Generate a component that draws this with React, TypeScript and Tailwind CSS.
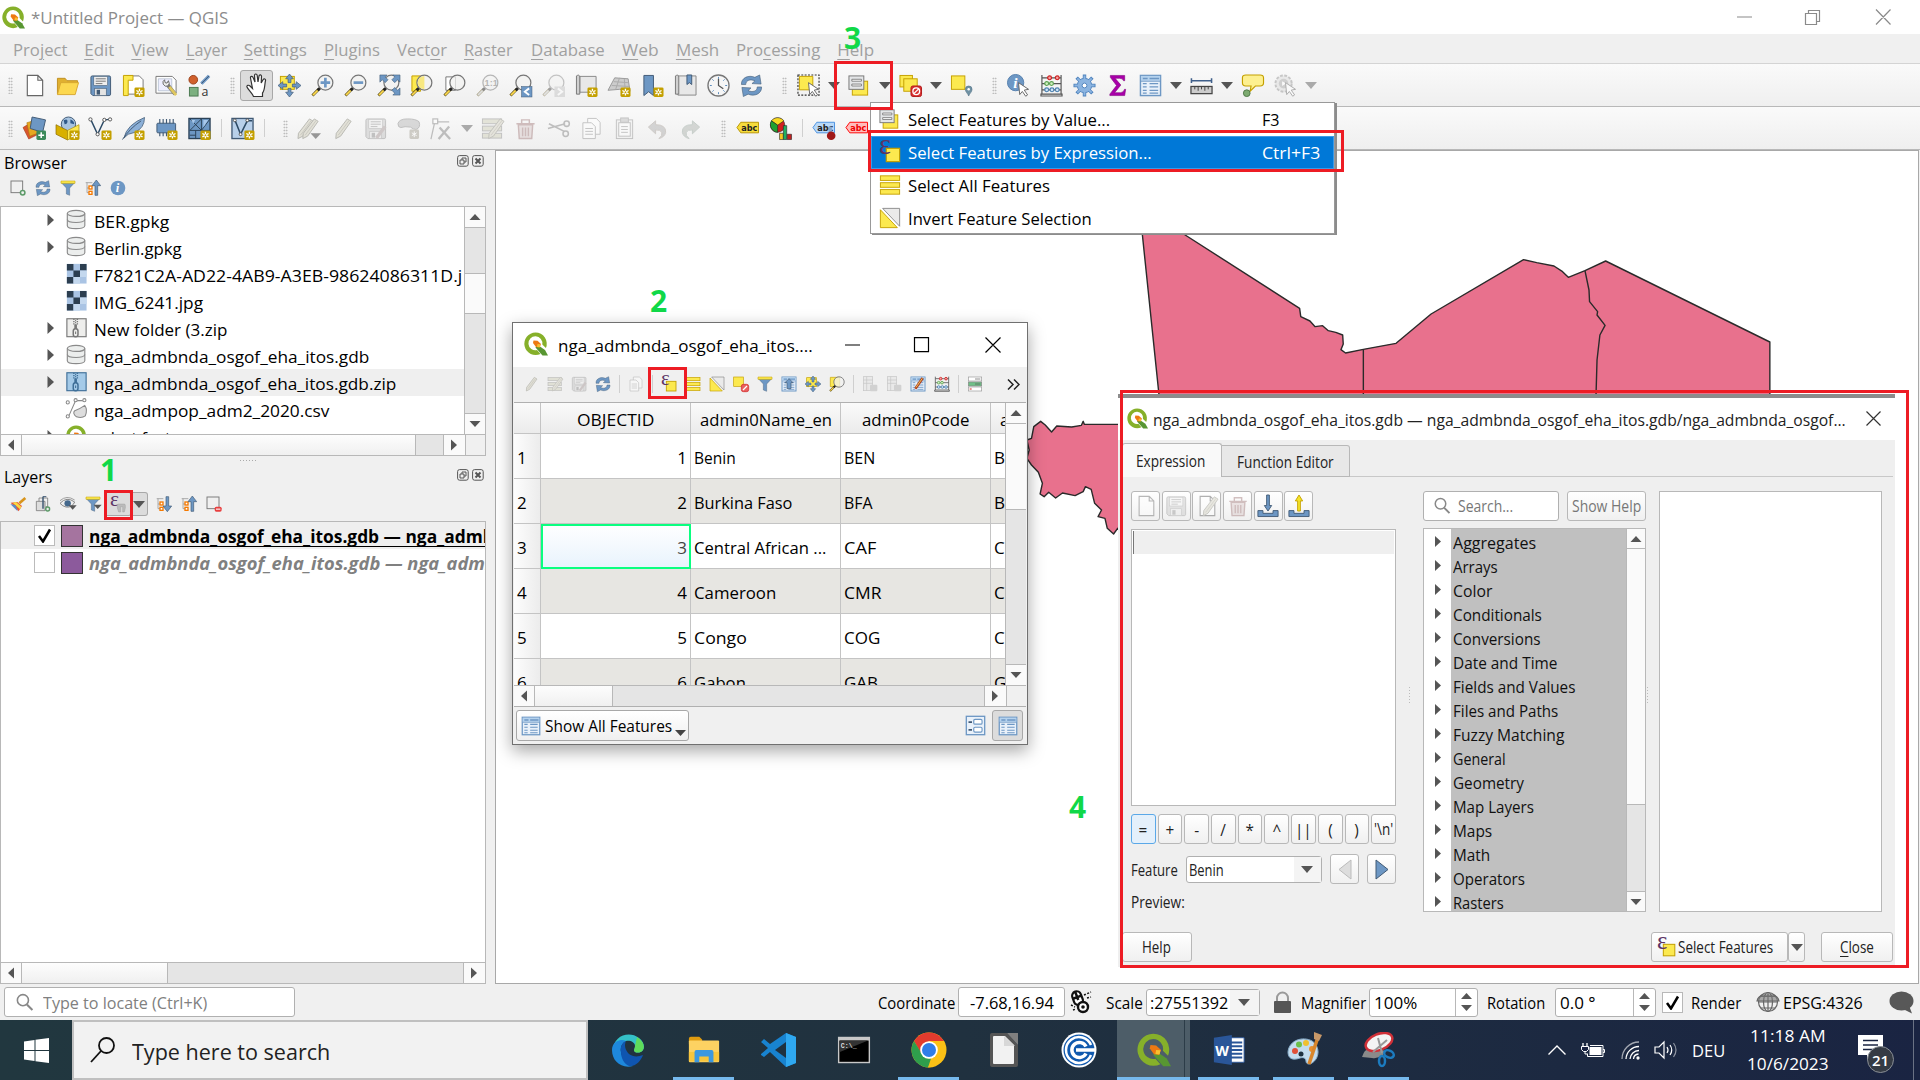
import React, { useLayoutEffect, useRef, useState } from "react";

type Kids = { children?: React.ReactNode };

/* Text squeezed or stretched horizontally to an exact width. "&" marks a mnemonic letter. */
function Fit({ w, t, className = "", inner = "" }: { w: number; t: string; className?: string; inner?: string }) {
  const ref = useRef<HTMLSpanElement>(null);
  const [s, setS] = useState(1);
  useLayoutEffect(() => {
    if (ref.current) setS(w / ref.current.offsetWidth);
  }, [w, t]);
  const i = t.indexOf("&");
  return (
    <span className={"inline-block shrink-0 whitespace-nowrap " + className} style={{ width: w }}>
      <span ref={ref} className={"inline-block origin-left whitespace-pre " + inner} style={{ transform: `scaleX(${s})` }}>
        {i < 0 ? (
          t
        ) : (
          <>
            {t.slice(0, i)}
            <span className="underline decoration-1 underline-offset-[3px]">{t[i + 1]}</span>
            {t.slice(i + 2)}
          </>
        )}
      </span>
    </span>
  );
}

const Y = "#fce94f";
const YS = "#c4a000";
const B = "#6d97c4";
const BS = "#415a75";

const Badge = ({ x = 13, y = 14 }: { x?: number; y?: number }) => (
  <g transform={`translate(${x} ${y})`}>
    <rect width="10.5" height="10" rx="1.5" fill="#c4a000" />
    <path d="M5.2 1.5v7M2 3.2l6.4 3.6M8.400 3.200l-6.400 3.600" stroke="#fff" strokeWidth="1.4" />
    <circle cx="5.200" cy="5" r="1" fill="#c4a000" />
  </g>
);
const Lens = ({ handle = "#fcd94f" }: { handle?: string }) => (
  <g>
    <path d="M1.500 22.500L8 16" stroke="#5a4a10" strokeWidth="3" />
    <path d="M2 22L7 17" stroke={handle} strokeWidth="1.800" />
    <path d="M7 17l3-3" stroke="#222" strokeWidth="3" />
    <circle cx="15" cy="9" r="7.800" fill="#f2f2f0" fillOpacity=".75" stroke="#777" strokeWidth="1.300" />
  </g>
);
const Pencil = () => (
  <g>
    <path d="M17 2l4 2.500L10 20l-5 2.500L5.500 17z" fill="#d8d6c8" stroke="#9a9a90" />
    <path d="M19 3.500L7.500 19" stroke="#b5b3a5" />
  </g>
);
const Disk = ({ c = B, s = BS }: { c?: string; s?: string }) => (
  <g>
    <path d="M2 3.500Q2 2 3.500 2H21q1.500 0 1.500 1.500V21q0 1.500-1.500 1.500H4L2 20.500z" fill={c} stroke={s} />
    <rect x="5" y="2.500" width="14.500" height="9.500" fill="#eee" stroke={s} strokeWidth=".6" />
    <path d="M7 5h10.500M7 7.500h10.500M7 10h7" stroke="#777" />
    <rect x="6" y="15" width="12" height="7.500" fill="#e4e4e4" stroke={s} strokeWidth=".6" />
    <rect x="8" y="16.500" width="3.500" height="5" fill={s} />
  </g>
);
const Page = () => <path d="M4.500 1.500h11l5 5v16h-16zM15.500 1.500v5h5" fill="#fff" stroke="#666" strokeWidth="1.200" />;
const Eps = ({ c = "#5c3566" }: { c?: string }) => (
  <text x="0" y="14" fontSize="31" fontFamily="Liberation Serif, serif" fill={c}>ε</text>
);
const Cursor = () => <path d="M12 9l10.500 7-4.500.8 3.500 5-2 1.400-3.500-5-2.700 3.300z" fill="#fff" stroke="#666" strokeWidth="1" />;
const Tree = () => (
  <g>
    <path d="M3 4v15M3 12h3M3 19h3M1 4h10" stroke="#888" fill="none" />
    <rect x="6" y="9" width="4.500" height="4.500" fill="#fff" stroke="#f57900" strokeWidth="2" />
    <rect x="6" y="17" width="4.500" height="4.500" fill="#fff" stroke="#f57900" strokeWidth="2" />
  </g>
);
const Grid = () => (
  <g>
    <rect x="1.500" y="1.500" width="21" height="21" fill="#e9f1fa" stroke={B} strokeWidth="1.500" />
    <path d="M2 4.500h20" stroke="#b4d2ee" strokeWidth="5" />
    <path d="M4 4.700h5M11 4.700h10" stroke={B} strokeWidth="1.800" />
    <path d="M4 10h4M4 13.500h4M4 17h4M4 20h4M11 10h9M11 13.500h9M11 17h9M11 20h9" stroke={B} strokeWidth="1.300" />
    <path d="M2 7.500h20" stroke={B} />
  </g>
);
const Abacus = () => (
  <g fill="none" strokeWidth="1.200">
    <path d="M2 1v20M22 1v20M1 21h22v2H1zM2 4h20M2 10h20M2 16.500h20" stroke="#555" />
    <g fill="#f8a0a0" stroke="#cc2020"><circle cx="10" cy="4" r="2" /><circle cx="18" cy="4" r="2" /></g>
    <g fill="#d0f0c0" stroke="#5aa050"><circle cx="7" cy="10" r="2" /><circle cx="12" cy="10" r="2" /></g>
    <g fill="#d0e4f8" stroke="#4a80b0"><circle cx="7" cy="16.500" r="2" /><circle cx="12.500" cy="16.500" r="2" /><circle cx="18" cy="16.500" r="2" /></g>
  </g>
);
const Bars = () => (
  <g fill={Y} stroke={YS}><rect x="1.500" y="2" width="21" height="5" /><rect x="1.500" y="9.500" width="21" height="5" /><rect x="1.500" y="17" width="21" height="5" /></g>
);
const Funnel = ({ c = B }: { c?: string }) => (
  <g>
    <path d="M2 4h20l-7.500 8v11l-5-2v-9z" fill={c} stroke={BS} strokeWidth=".6" />
    <path d="M1.500 1.500h21v3.500h-21z" fill={Y} stroke={YS} strokeWidth=".8" />
  </g>
);
const Tri = ({ d, x = 0, y = 0 }: { d: string; x?: number; y?: number }) => <path transform={`translate(${x} ${y})`} d={d} fill="#555" />;
const Refresh = () => (
  <g fill={B} stroke={BS} strokeWidth=".6">
    <path d="M1.500 11C1 4 9 .5 15.500 3.500L20.500 1l1.500 9.500-9.500-.5 3-2.800C11 5 6 6.500 6 11z" />
    <path d="M22.500 13.500C23 20.500 15 24 8.500 21l-5 2.500L2 14l9.500.5-3 2.800C13 19.500 18 18 18 13.500z" />
  </g>
);
const Move = ({ y = true }: { y?: boolean }) => (
  <g>
    {y && <rect x="2.500" y="2.500" width="14.500" height="13.500" fill={Y} stroke={YS} />}
    <path d="M12 0l4 5h-2.500v4h-3V5H8zM12 24l4-5h-2.500v-4h-3v4H8zM0 12l5-4v2.500h4v3H5V16zM24 12l-5-4v2.500h-4v3h4V16z" fill={B} stroke={BS} strokeWidth=".7" />
  </g>
);
const Q = () => (
  <g>
    <path fillRule="evenodd" d="M11.500.5a11.300 11.300 0 1 0 5 21.500l-3.500-3.900a7 7 0 1 1 5.300-5.600l3.600 3.600A11.300 11.300 0 0 0 11.500.5z" fill="#86b02a" />
    <path d="M13 12.500l8 5.500 3 5.500h-5.500l-7-8z" fill="#589632" />
    <path d="M9.500 8.500l4 .3L17 12l-1.500 3.500-3.500-.5-3-4z" fill="#ee7913" />
    <path d="M13.500 12l3 .2-.5 3-3-.3z" fill="#f8c030" />
  </g>
);
const RulerPage = () => (
  <g><path d="M5 2h13l4 4v15H5z" fill="#fff" stroke="#777" /><path d="M1.500 1.500h10v5h-5v16h-5z" fill={Y} stroke={YS} /></g>
);
const Lbl = ({ bg, bd, fg = "#222" }: { bg: string; bd: string; fg?: string }) => (
  <g>
    <path d="M1 11L5 5.500H23.500v11H5z" fill={bg} stroke={bd} />
    <text x="5.500" y="14.200" fontSize="8.500" fontWeight="bold" fontFamily="DejaVu Sans, sans-serif" fill={fg}>abc</text>
  </g>
);
const Zip = ({ c, s }: { c: string; s: string }) => (
  <g>
    <rect x="1" y="2" width="22" height="20.500" fill={c} stroke={s} strokeWidth="1.300" />
    <path d="M9 2v7M13 2v7" stroke={s} strokeWidth="1.600" strokeDasharray="1.500 1" />
    <path d="M11 2v7" stroke={s} strokeWidth="1.200" strokeDasharray="1.500 1" strokeDashoffset="1.250" />
    <path d="M11 8.500v6" stroke={s} strokeWidth="3" />
    <rect x="8.300" y="13.500" width="5.400" height="9" rx="2.600" fill={c} stroke={s} strokeWidth="1.700" />
    <path d="M11 16.500v3" stroke={s} strokeWidth="1.200" />
  </g>
);

const icons: Record<string, React.ReactNode> = {
  q: <Q />,
  page: <Page />,
  open: <g><path d="M1.500 21V4.500h8l2 2.500h11v3" fill="#e0b030" stroke="#c09020" /><path d="M1.500 21.500L5 9h18.500L20 21.500z" fill="#fcd850" stroke="#d8a830" /></g>,
  save: <Disk />,
  layout: <g><RulerPage /><Badge /></g>,
  manager: <g><path d="M1 2.500h17l4 4V20H1z" fill="#fff" stroke="#777" /><path d="M3.500 5h14v12.500h-14z" fill="#eef" stroke="#9ab" strokeWidth=".6" /><path d="M12 10l9 11" stroke="#777" strokeWidth="4" /><path d="M15 13.500l7 8.500" stroke="#e0c860" strokeWidth="3" /><path d="M8.500 10.500q-1-3 1.500-4.500l.5 3 2 .5 1.500-2.500q2 3-.5 5.500-3 1.500-5-2z" fill="#eee" stroke="#666" /></g>,
  style: <g><circle cx="5.500" cy="6" r="4.500" fill="#d0602c" stroke="#9a4018" /><path d="M14 10L22 2" stroke={B} strokeWidth="3.500" /><path d="M14 10L22 2" stroke={BS} strokeWidth="1" /><rect x="1.500" y="14" width="9" height="9" fill="#7cb080" stroke="#4a7850" /><text x="14" y="23" fontSize="13" fontFamily="Open Sans, sans-serif" fill="#333">a</text></g>,
  hand: <path d="M8.500 23.500c-1-3-5.500-7-6.500-9.500-.5-1.500 1.500-2.500 3-1l2.500 2.500L5.500 5c-.3-2 2-2.300 2.600-.5L10 9 9.500 2.500c0-2 2.500-2 2.700 0L13 9l1-6c.4-1.700 2.600-1.300 2.500.5L16.200 10l2-3.500c.9-1.300 2.700-.5 2.300 1C19.500 12 20 17 17.500 20v3.500z" fill="#fff" stroke="#333" strokeWidth="1.200" />,
  pan: <Move />,
  zin: <g><Lens /><path d="M15 4v10M10 9h10" stroke={B} strokeWidth="2.800" /></g>,
  zout: <g><Lens /><path d="M10 9h10" stroke={B} strokeWidth="2.800" /></g>,
  zfull: <g><Lens /><g fill={B} stroke={BS} strokeWidth=".6"><path d="M3 1h7.500l-2 2 3 3-3 3-3-3-2.500 2.500zM24 1h-7.500l2 2-3 3 3 3 3-3 2.500 2.500zM24 22h-7.500l2-2-3-3 3-3 3 3 2.500-2.500z" /></g></g>,
  zsel: <g><path d="M2 2h9v16H2z" fill={Y} stroke={YS} /><Lens /><path d="M15 2a7 7 0 0 0 0 14z" fill="#f8e880" /></g>,
  zlay: <g><path d="M3 3h10v14H3z" fill="#fff" stroke="#777" /><Lens /></g>,
  zone: <g opacity=".5"><Lens handle="#ccc" /><text x="9" y="12.500" fontSize="9.500" fontWeight="bold" fontFamily="Liberation Sans, sans-serif" fill="#777">1:1</text></g>,
  zlast: <g><Lens /><rect x="13" y="13" width="11" height="11" fill={B} stroke={BS} strokeWidth=".5" /><path d="M21 15l-4.500 3.500L21 22" fill="none" stroke="#fff" strokeWidth="2" /></g>,
  znext: <g opacity=".4"><Lens handle="#ccc" /><rect x="13" y="13" width="11" height="11" fill="#bbb" /><path d="M16.500 15l4.500 3.500-4.500 3.500" fill="none" stroke="#fff" strokeWidth="2" /></g>,
  newmap: <g><path d="M5 2.500h17V19H5z" fill="#e8e8e8" stroke="#888" /><path d="M1.500 2q3-2 3.500 1v18h-3.500z" fill="#d0d0d0" stroke="#777" /><Badge /></g>,
  map3d: <g><path d="M7 4l14 1 2 13-11-2-12 1z" fill="#ccc" stroke="#999" /><path d="M6 8l15 1M4 12l18 1M12 4l-4 12M17 5l1 12" stroke="#aaa" fill="none" /><Badge /></g>,
  bookm: <g><path d="M3 1.500h10v21l-5-4-5 4z" fill={B} stroke={BS} /><Badge /></g>,
  book: <g><path d="M4 2h19v20H4z" fill="#e8e8e8" stroke="#888" /><path d="M1.500 2q3-2 3.500 1v18h-3.500z" fill="#d0d0d0" stroke="#777" /><path d="M13.500 1h5v10l-2.500-2-2.500 2z" fill={B} stroke={BS} /></g>,
  clock: <g><circle cx="12" cy="12" r="11" fill="#f6f6f6" stroke="#777" strokeWidth="1.400" /><path d="M12 3v2M12 19v2M3 12h2M19 12h2M5.600 5.600l1.400 1.400M18.400 5.600L17 7M5.600 18.400L7 17M18.400 18.400L17 17" stroke="#5588bb" /><path d="M12 5v7l5 3.500" fill="none" stroke="#555" strokeWidth="1.300" /></g>,
  refresh: <Refresh />,
  select: <g><rect x="1" y="1" width="22" height="21" fill="none" stroke="#333" strokeWidth="1.200" strokeDasharray="2 1.500" /><path d="M2.500 2.500h14v14h-14z" fill={Y} stroke={YS} /><Cursor /></g>,
  selval: <g><rect x="4.500" y="7.500" width="16" height="14.500" fill={Y} stroke={YS} /><rect x="1" y="2" width="15.500" height="14" fill="#e4e6e8" stroke="#777" /><path d="M4 5.500h10v2H4zM4 10.500h10v2H4z" fill="#fff" stroke="#666" strokeWidth=".8" /></g>,
  desel: <g fill={Y} stroke={YS}><rect x="1" y="1.500" width="13" height="12" /><rect x="5" y="5" width="14" height="13" /><rect x="12.500" y="12.500" width="11" height="11" rx="2" fill="#d83030" stroke="#b01818" /><circle cx="18" cy="18" r="3.500" fill="none" stroke="#fff" strokeWidth="1.400" /><path d="M20.500 15.500l-5 5" stroke="#fff" strokeWidth="1.400" /></g>,
  selloc: <g><rect x="1.500" y="2" width="14" height="14" fill={Y} stroke={YS} /><path d="M19.500 23c-1-3-3.500-4-3.500-7a3.500 3.500 0 0 1 7 0c0 3-2.500 4-3.500 7z" fill="#6f91a3" stroke="#4a6a80" strokeWidth=".6" /><circle cx="19.500" cy="16" r="1.300" fill="#fff" /></g>,
  ident: <g><circle cx="9" cy="9" r="8.500" fill={B} stroke="#5580ad" /><text x="6.500" y="14.500" fontSize="16" fontWeight="bold" fontStyle="italic" fontFamily="Liberation Serif, serif" fill="#fff">i</text><Cursor /></g>,
  abacus: <Abacus />,
  gear: <g><path d="M12 .5v23M.5 12h23M3.800 3.800l16.400 16.400M20.200 3.800L3.800 20.200" stroke="#4f83bd" strokeWidth="3.600" /><circle cx="12" cy="12" r="7.500" fill="#8bb4e0" stroke="#4f83bd" /><path d="M12 1.500v21M1.500 12h21M4.500 4.500l15 15M19.500 4.500l-15 15" stroke="#8bb4e0" strokeWidth="2" /><circle cx="12" cy="12" r="2.500" fill="#fff" stroke="#4f83bd" /></g>,
  sigma: <path d="M4.500 1.500h15V7h-1.200Q17.500 4.500 14 4.500H9.500l6 7-6.500 8h6q3.500 0 4.300-3.500h1.200L19.500 22.500H4V21l7-9-6.500-8.500z" fill="#a800a8" stroke="#800080" strokeWidth=".6" />,
  table: <Grid />,
  ruler: <g><path d="M2 7h20M1.500 4.500v5M22.500 4.500v5" stroke="#3f5f8a" strokeWidth="1.600" /><rect x="1" y="13" width="22" height="7.500" fill="#ccc" stroke="#444" strokeWidth="1.300" /><path d="M5 13v3M8.500 13v4.500M12 13v3M15.500 13v4.500M19 13v3" stroke="#444" /></g>,
  tip: <g><path d="M5 1h15q3.500 0 3.500 3v5.500q0 3-3.500 3h-5l-5.500 5.500 1-5.500H5q-3.500 0-3.500-3V4Q1.500 1 5 1z" fill="#fdf090" stroke="#c4a000" strokeWidth="1.200" /><circle cx="6" cy="20" r="3.500" fill="#7caa70" stroke="#507848" /></g>,
  run: <g opacity=".5"><circle cx="10" cy="10" r="8.500" fill="#ddd" stroke="#999" strokeDasharray="3 1.500" strokeWidth="2" /><circle cx="10" cy="10" r="5" fill="#aaa" /><path d="M8.500 7.500l4 2.500-4 2.500z" fill="#fff" /><Cursor /></g>,
  dsrc: <g><path d="M0 11l8-5 8 12-10 5z" fill="#d8562c" stroke="#a03818" strokeWidth=".6" /><path d="M4 6l10-3 4 13-11 4z" fill="#e8a820" stroke="#a87810" strokeWidth=".6" /><path d="M9.500 0l14 3-3 13-13-4z" fill={B} stroke={BS} /><rect x="14" y="14" width="10" height="10" rx="1.500" fill="#3c8a5a" /><path d="M19 16v6M16 19h6" stroke="#fff" strokeWidth="1.600" /></g>,
  gpkg: <g><circle cx="13" cy="7.500" r="7.500" fill="#a8c4e0" stroke={BS} /><path d="M8 3.500q4-2 4 1t-3 3zM15 2.500q4 1 4 5l-4-1z" fill="#2f5a8a" /><path d="M0 8l12 6v10L0 18z" fill="#d8b000" stroke="#8a6a00" strokeWidth=".7" /><path d="M24 8l-12 6v10l12-6z" fill="#fce850" stroke="#a88a00" strokeWidth=".7" /><Badge x={14} y={14} /></g>,
  vlay: <g><path d="M2 3l7 15 7-15 6-.5" fill="none" stroke="#2c4a66" strokeWidth="1.500" /><g fill="#fff" stroke="#555"><circle cx="1.500" cy="2.500" r="1.700" /><circle cx="9" cy="18" r="1.700" /><circle cx="16" cy="3" r="1.700" /><circle cx="22" cy="2.500" r="1.700" /></g><Badge /></g>,
  feather: <g><path d="M2 22Q5 8 23.500.5q0 11-10 15.500l-7 2z" fill="#8cb0d8" stroke={BS} strokeWidth=".8" /><path d="M.5 23.500Q8 12 20 4" stroke={BS} fill="none" /><Badge /></g>,
  chip: <g><path d="M5 2v18M8.500 2v18M12 2v18M15.500 2v18M19 2v18" stroke="#415a75" strokeWidth="1.200" /><rect x="2" y="6.500" width="19.500" height="10" rx="1" fill={B} stroke={BS} /><Badge /></g>,
  virt: <g><rect x="1" y="1.500" width="22" height="21" fill={B} stroke="#2c4258" strokeWidth="1.400" /><path d="M2 14h21M14 2v12M2 2l12 12M14 2L2 14M23 2l-9 12M8 14v9M14 14v9M2 19h6" stroke="#2c4258" /><path d="M3.500 3h4l-2 4zM16 3h5l-5 8z" fill="#a8c8ec" /><Badge /></g>,
  vtab: <g><rect x="1" y="1.500" width="22" height="21" fill="#b8d0ea" stroke={BS} strokeWidth="1.400" /><path d="M4 3l6 15 7-14h5" fill="none" stroke="#2c4a66" strokeWidth="1.600" /><g fill="#fff" stroke="#555"><circle cx="4" cy="3.500" r="1.500" /><circle cx="10" cy="18" r="1.500" /><circle cx="17" cy="3.500" r="1.500" /></g><Badge x={14} y={14} /></g>,
  pencils: <g opacity=".65"><g transform="translate(-5 0)"><Pencil /></g><g transform="translate(0 0)"><Pencil /></g><path d="M13 17h11l-5.500 6z" fill="#666" /></g>,
  pencil: <g opacity=".65"><Pencil /></g>,
  gsave: <g opacity=".4"><Disk c="#bbb" s="#777" /><path d="M13 22L22 10" stroke="#988" strokeWidth="3.500" /></g>,
  blob: <g opacity=".5"><path d="M1 7q1-5 10-5t12 3q2 6-3 8-3 0-6-2.500Q8 9.500 4 11 1 11 1 7z" fill="#bbb" stroke="#888" /><rect x="13" y="13" width="10" height="10" rx="1.500" fill="#a8a498" /><path d="M18 15v6M15.500 16.500l5 3M20.500 16.500l-5 3" stroke="#fff" /></g>,
  vtx: <g opacity=".5" fill="none" stroke="#888" strokeWidth="1.300"><path d="M1 23L5 5h15" /><rect x="3" y="2" width="5" height="5" fill="#fff" /><path d="M10 11l11 12M20 10L9 23" strokeWidth="2.400" /></g>,
  multi: <g opacity=".55"><g fill="#d4d4c0" stroke="#999"><rect x="1.500" y="2" width="20" height="5" /><rect x="1.500" y="9.500" width="20" height="5" /><rect x="1.500" y="17" width="20" height="5" /></g><g transform="translate(3 0)"><Pencil /></g></g>,
  trash: <g opacity=".45" fill="none" stroke="#a07878" strokeWidth="1.500"><path d="M2.500 7h19M8 6.500V3h8v3.500" /><path d="M4.500 8h15l-1 14.500h-13z" fill="#d8c8c8" /><path d="M9 11v9M12 11v9M15 11v9" /></g>,
  cut: <g opacity=".5" fill="none" stroke="#888" strokeWidth="1.600"><path d="M2 7l16 8M1 12l18-5" /><circle cx="19.500" cy="17.500" r="2.800" /><circle cx="20.500" cy="7" r="2.800" /></g>,
  copy: <g opacity=".45" stroke="#888" fill="#fff"><path d="M8 1.500h9l4 4V18H8z" /><path d="M3 6h9l4 4v12.500H3z" /><path d="M5.500 12h8M5.500 15h8M5.500 18h8" /></g>,
  paste: <g opacity=".45" stroke="#888" fill="#eee"><rect x="3.500" y="3" width="17" height="19.500" /><rect x="6" y="6" width="12" height="14" fill="#fff" /><rect x="8" y="1" width="8" height="4.500" fill="#bbb" /><path d="M8.500 10h7M8.500 13h7M8.500 16h7" /></g>,
  undo: <path opacity=".45" d="M2.500 10.500L10 4v4q11 0 10.500 8-1 5-7 6.500 4-3 3-6.500-1.500-3-6.500-2.500v4z" fill="#aaa" stroke="#a09890" />,
  redo: <path opacity=".45" d="M21.500 10.500L14 4v4Q3 8 3.500 16q1 5 7 6.500-4-3-3-6.500Q9 13 14 13.500v4z" fill="#aab0aa" stroke="#90a098" />,
  abcY: <Lbl bg="#f6dc3c" bd="#b89400" />,
  abcB: <g><Lbl bg="#b8d8f8" bd="#4a90e0" /><path d="M19 10v8" stroke="#88a8d0" strokeWidth="3.500" /><circle cx="20" cy="19.500" r="4.500" fill="#a01818" /></g>,
  abcR: <Lbl bg="#fbb" bd="#f00" fg="#e00" />,
  pie: <g stroke="#222" strokeWidth=".6"><circle cx="9" cy="8.500" r="7.500" fill="#d02020" /><path d="M9 8.500L2.500 4a8 8 0 0 1 13 0z" fill="#f8d820" /><path d="M9 8.500L2.500 4A8 8 0 0 0 9 16z" fill="#20a030" /><path d="M11 17h4v6.500h-4z" fill="#f8c820" /><path d="M15 9h3.500v14.500H15z" fill="#20b060" /><path d="M19 18h4.500v5.500H19z" fill="#c02020" /></g>,
  addb: <g><rect x="1.500" y="1.500" width="17.500" height="17.500" fill="none" stroke="#777" strokeWidth="1.400" /><circle cx="19" cy="19" r="4.500" fill="#5c9a68" /><circle cx="19" cy="19" r="2.200" fill="#eee" /></g>,
  funnel: <Funnel />,
  treeup: <g><Tree /><path d="M17 0l6.500 8.500H19V23h-4V8.500h-4.500z" fill={B} stroke={BS} /></g>,
  treedn: <g><Tree /><path d="M17 23.500l6.500-8.500H19V1h-4v14h-4.500z" fill={B} stroke={BS} /></g>,
  info: <g><circle cx="12" cy="12" r="11" fill={B} /><text x="8.500" y="18.500" fontSize="19" fontWeight="bold" fontStyle="italic" fontFamily="Liberation Serif, serif" fill="#fff">i</text></g>,
  brush: <g><path d="M14 11L23 3" stroke="#d8941c" strokeWidth="4" /><path d="M1 10l10-1 7 6-5 8z" fill="#e85838" /><path d="M4 10l5-1 8 7-2 4z" fill="#f8d840" /><path d="M.5 12l11 11-3-9z" fill="#5a8ac8" /></g>,
  addgrp: <g fill="none" stroke="#777" strokeWidth="1.200"><path d="M6 8V3h13v13h-3" /><path d="M2 8v14h13V8z" fill="#ddd" /><path d="M12 19V1l5 0M12 1v18" stroke={BS} strokeWidth="1.500" /><circle cx="19" cy="19.500" r="4" fill="#5c9a68" stroke="none" /><circle cx="19" cy="19.500" r="1.800" fill="#eee" stroke="none" /></g>,
  eye: <g><path d="M0 11Q10 0 22 9q-4 9-13 7.500-5-1-9-5.500z" fill="#eee" stroke="#888" strokeWidth="1.500" /><circle cx="11.500" cy="11" r="4.800" fill="#44688c" /><path d="M0 7Q10-2 22 6" fill="none" stroke="#999" strokeWidth="1.400" /><Tri d="M0 0h12L6 6.500z" x={13} y={14} /></g>,
  funneld: <g><Funnel /><Tri d="M0 0h12L6 6.500z" x={13} y={13} /></g>,
  epsf: <g><text x="0" y="14.500" fontSize="32" fontFamily="Liberation Serif, serif" fill="#5c3566">ε</text><path d="M11 14q0-2 2-2h8q2 0 2 2v4l-1.500 6h-2.500v-8h-3v8h-3l-2-6z" fill="#bbb" stroke="#999" strokeWidth=".6" /></g>,
  remb: <g><rect x="1.500" y="1.500" width="18" height="17.500" fill="none" stroke="#777" strokeWidth="1.400" /><rect x="13" y="16" width="10.500" height="7.500" rx="2.500" fill="#e84040" /><path d="M15 19.700h6.500" stroke="#fff" strokeWidth="1.600" /></g>,
  db: <g fill="#eceeed" stroke="#8a8a8a" strokeWidth="1.300"><path d="M1.500 5v14c0 4.500 20 4.500 20 0V5" /><ellipse cx="11.500" cy="5" rx="10" ry="3.500" /><path d="M1.500 12c0 4.500 20 4.500 20 0" fill="none" /></g>,
  raster: <g><rect x="1" y="1" width="22.500" height="22.500" fill="#aac4e4" /><path d="M1 1h7.500v7.500H1zM16 1h7.500v7.500H16zM8.500 8.500H16V16H8.500zM1 16h7.500v7.500H1z" fill="#2c3e50" /><path d="M8.500 16H16v7.500H8.500zM16 8.500h7.500V16H16z" fill="#c4d8ee" /></g>,
  zip: <Zip c="#eeeeec" s="#777" />,
  zipb: <Zip c="#a4cae8" s="#3f6f98" />,
  csv: <g fill="none" stroke="#888" strokeWidth="1.200"><path d="M3 21L11 3h9" /><g fill="#fff"><circle cx="2" cy="5" r="1.800" /><circle cx="2" cy="21" r="1.800" /><circle cx="11" cy="2.500" r="1.800" /><circle cx="21" cy="2.500" r="1.800" /></g><path d="M21.500 8.500q3.500 5 .5 12-4 3-10 1-5-4-2-7 6-2 11.500-6z" fill="#ddd" /></g>,
  selexp: <g><rect x="8" y="8" width="14.500" height="14.500" fill={Y} stroke={YS} strokeWidth="1.300" /><Eps /></g>,
  bars: <Bars />,
  invert: <g><path d="M1.500 3v19.500H20z" fill={Y} stroke={YS} /><path d="M4 1.500h18.500V21z" fill="#eaeaea" stroke="#888" /></g>,
  desel2: <g fill={Y} stroke={YS}><rect x="1" y="1.500" width="14.500" height="14" /><rect x="12.500" y="12.500" width="11" height="11" rx="3" fill="#e86060" stroke="#d02020" /><path d="M15 21l6-6" stroke="#fff" strokeWidth="1.800" /></g>,
  totop: <g><Grid /><path d="M12 4l6 6h-3v9H9v-9H6z" fill={B} stroke={BS} /></g>,
  zrow: <g><path d="M2 2h14v14H2z" fill={Y} stroke={YS} /><Lens /></g>,
  colg: <g opacity=".35"><rect x="2" y="1" width="14" height="21" fill="#ddd" stroke="#777" /><path d="M2 6h14M2 11h14M7 1v21" stroke="#777" /><rect x="12" y="13" width="11" height="10" rx="1.500" fill="#999" /></g>,
  edit: <g><Grid /><path d="M8 19L19 3" stroke="#b04020" strokeWidth="4" /><path d="M9 17L18.500 3.500" stroke="#f0d060" strokeWidth="1.400" /></g>,
  cond: <g><rect x="2" y="1.500" width="20" height="6" fill="#fff" stroke="#999" /><rect x="2" y="9" width="20" height="6" fill="#6fbf86" stroke="#888" /><rect x="2" y="16.500" width="20" height="6" fill="#fff" stroke="#999" /><path d="M12 4.500h8M12 12h8" stroke="#555" /><path d="M4 19.500h3" stroke="#e02020" strokeWidth="1.500" /></g>,
  form: <g><rect x="1.500" y="1.500" width="21" height="21" fill="#e9f1fa" stroke={B} strokeWidth="1.500" /><path d="M4 8h4M4 17h4" stroke={BS} strokeWidth="2" /><rect x="10" y="5" width="9.500" height="5.500" rx="1.500" fill="#fff" stroke={B} strokeWidth="1.300" /><rect x="10" y="14" width="9.500" height="5.500" rx="1.500" fill="#fff" stroke={B} strokeWidth="1.300" /></g>,
  import: <g><path d="M1 17h5.500v3h11v-3H23v6.500H1z" fill={B} stroke={BS} /><path d="M12 17.500l-4-6h2.500V0h3v11.500H16z" fill={B} stroke={BS} /></g>,
  export: <g><path d="M1 17h5.500v3h11v-3H23v6.500H1z" fill={B} stroke={BS} /><path d="M12 0L8 6.500h2.500v11h3v-11H16z" fill="#f4e428" stroke={YS} /></g>,
  pageP: <g opacity=".45"><Page /></g>,
  diskP: <g opacity=".35"><Disk c="#bbb" s="#777" /></g>,
  editP: <g opacity=".5"><Page /><g transform="translate(3 0)"><Pencil /></g></g>,
  lens: <g fill="none" stroke="#888" strokeWidth="2"><circle cx="10" cy="9" r="7" /><path d="M15 14.500l7 7" strokeWidth="2.600" /></g>,
};

function Ic({ n, s = 24 }: { n: string; s?: number }) {
  return (
    <svg viewBox="0 0 24 24" width={s} height={s} className="shrink-0 overflow-visible">
      {icons[n]}
    </svg>
  );
}

const Cell = ({ n }: { n: string }) => (
  <div className="flex w-[33px] shrink-0 justify-center">
    <Ic n={n} s={23} />
  </div>
);
const Grip = () => (
  <div className="flex w-[24px] shrink-0 justify-center pl-2">
    <div className="h-[17px] w-[5px] bg-[radial-gradient(#b0b0b0_0.7px,transparent_0.9px)] bg-[length:2.5px_3px]" />
  </div>
);
const Arr = ({ c = "#555" }: { c?: string }) => (
  <div className="flex w-[18px] shrink-0 justify-center">
    <svg width="12" height="7" viewBox="0 0 12 7"><path d="M0 0h12L6 7z" fill={c} /></svg>
  </div>
);
const Sep = ({ w = "w-[10px]" }: { w?: string }) => (
  <div className={w + " flex shrink-0 justify-center"}><div className="h-[18px] w-px bg-[#cfcfcf]" /></div>
);

function Tools({ items }: { items: string }) {
  return (
    <>
      {items.split(" ").map((n, i) =>
        n === "|" ? <Grip key={i} /> : n === "-" ? <Sep key={i} /> : n === "v" ? <Arr key={i} /> : n === "w" ? <Arr key={i} c="#aaa" /> : n === "hand" ? (
          <div key={i} className="flex h-[31px] w-[33px] shrink-0 items-center justify-center rounded-[3px] border border-[#a8a8a8] bg-[#dcdcdc]"><Ic n="hand" /></div>
        ) : <Cell key={i} n={n} />
      )}
    </>
  );
}

type Dir = "u" | "d" | "l" | "r";
const SBtn = ({ d, className = "" }: { d: Dir; className?: string }) => (
  <div className={"flex shrink-0 items-center justify-center border-[#b8b8b8] bg-[#fafafa] " + className}>
    <svg width="12" height="12" viewBox="0 0 12 12" className={d === "u" ? "" : d === "d" ? "rotate-180" : d === "l" ? "-rotate-90" : "rotate-90"}>
      <path d="M.5 9h11L6 3z" fill="#555" />
    </svg>
  </div>
);
const VBar = ({ top, thumb, w, btn = "h-[21px]" }: { top: string; thumb: string; w: string; btn?: string }) => (
  <div className={w + " flex shrink-0 flex-col border-l border-[#b8b8b8] bg-[#e5e5e5]"}>
    <SBtn d="u" className={btn + " border-b"} />
    <div className={top} />
    <div className={thumb + " border-y border-[#b8b8b8] bg-[#fafafa]"} />
    <div className="flex-1" />
    <SBtn d="d" className={btn + " border-t"} />
  </div>
);
const HBar = ({ thumb, h = "h-[21px]" }: { thumb: string; h?: string }) => (
  <div className={h + " flex min-w-0 flex-1 border-t border-[#b8b8b8] bg-[#e5e5e5]"}>
    <SBtn d="l" className="w-[21px] border-r" />
    <div className={thumb + " border-r border-[#b8b8b8] bg-gradient-to-b from-[#fdfdfd] to-[#f0f0f0]"} />
    <div className="flex-1" />
    <SBtn d="r" className="w-[22px] border-l pr-[2px]" />
  </div>
);

const DockHead = ({ t, w }: { t: string; w: number }) => (
  <div className="flex h-[25px] shrink-0 items-center pl-[4px] pr-[10px]">
    <Fit t={t} w={w} />
    <div className="flex-1" />
    <svg width="28" height="12" viewBox="0 0 28 12" className="mb-[3px]" fill="none" stroke="#555">
      <rect x=".6" y=".6" width="10.600" height="10.600" rx="2" />
      <path d="M3 5h4v4H3zM5 5V3h4v4H7" />
      <rect x="15.600" y=".6" width="10.600" height="10.600" rx="2" />
      <path d="M18.500 3.500l5 5M23.500 3.500l-5 5" strokeWidth="2" />
    </svg>
  </div>
);

const small = (n: string) => <div key={n} className="flex w-[25px] shrink-0 justify-center"><Ic n={n} s={16} /></div>;

const tree: [string, string, number, boolean][] = [
  ["db", "BER.gpkg", 75, true],
  ["db", "Berlin.gpkg", 88, true],
  ["raster", "F7821C2A-AD22-4AB9-A3EB-98624086311D.j", 368, false],
  ["raster", "IMG_6241.jpg", 109, false],
  ["zip", "New folder (3.zip", 133, true],
  ["db", "nga_admbnda_osgof_eha_itos.gdb", 275, true],
  ["zipb", "nga_admbnda_osgof_eha_itos.gdb.zip", 302, true],
  ["csv", "nga_admpop_adm2_2020.csv", 235, false],
  ["q", "select features", 110, true],
];

function Docks() {
  return (
    <div className="flex w-[495px] shrink-0 flex-col">
      <DockHead t="Browser" w={63} />
      <div className="flex h-[31px] shrink-0 items-center pb-[5px] pl-[5px]">
        {["addb", "refresh", "funnel", "treeup", "info"].map(small)}
      </div>
      <div className="flex h-[250px] w-[486px] shrink-0 flex-col border border-[#b8b8b8] bg-white">
        <div className="flex min-h-0 flex-1">
          <div className="min-w-0 flex-1 overflow-hidden">
            {tree.map(([ic, t, w, a], i) => (
              <div key={i} className={"flex h-[27px] items-center pl-[46px] " + (i === 6 ? "bg-[#efefef]" : "")}>
                <div className="mb-[1px] w-[19px]">{a && <svg width="7" height="12" viewBox="0 0 7 12"><path d="M.5 0v12L7 6z" fill="#555" /></svg>}</div>
                <div className="mb-[2px]"><Ic n={ic} s={21} /></div>
                <Fit t={t} w={w} className="ml-[7px] mt-[3px]" />
              </div>
            ))}
          </div>
          <VBar w="w-[21px]" top="h-[45px]" thumb="h-[41px]" />
        </div>
        <div className="flex"><HBar thumb="w-[394px]" /><div className="w-[20px] border-l border-t border-[#b8b8b8] bg-[#f0f0f0]" /></div>
      </div>
      <div className="flex h-[8px] shrink-0 items-center justify-center"><div className="h-[3px] w-[18px] bg-[radial-gradient(#aaa_0.7px,transparent_0.9px)] bg-[length:3px_3px]" /></div>
      <DockHead t="Layers" w={48} />
      <div className="flex h-[32px] shrink-0 items-center pb-[2px] pl-[5px]">
        {["brush", "addgrp", "eye", "funneld"].map(small)}
        <div className="flex h-[24px] w-[26px] items-center justify-center rounded-[2px] border border-[#a8a8a8] bg-[#dcdcdc]"><Ic n="epsf" s={16} /></div>
        <div className="mr-[3px] flex h-[24px] w-[17px] items-center justify-center rounded-r-[3px] border border-l-0 border-[#a8a8a8] bg-[#dcdcdc]"><Arr /></div>
        {["treedn", "treeup", "remb"].map(small)}
      </div>
      <div className="flex min-h-0 w-[486px] flex-1 flex-col border border-[#b8b8b8] bg-white">
        <div className="min-h-0 flex-1 overflow-hidden">
          {[0, 1].map((i) => (
            <div key={i} className={"flex h-[27px] items-center pl-[33px] font-bold " + (i ? "italic text-[#808080]" : "bg-[#efefef]")}>
              <div className="flex size-[21px] shrink-0 items-center justify-center border border-[#bbb] bg-white">{!i && <Check />}</div>
              <div className={"ml-[6px] size-[22px] shrink-0 border border-[#333] " + (i ? "bg-[#8c5a9c]" : "bg-[#a5749f]")} />
              <Fit t="nga_admbnda_osgof_eha_itos.gdb — nga_admb" w={i ? 407 : 405} className="ml-[6px] mt-[3px]" inner={i ? "" : "underline decoration-1 underline-offset-[3px] [text-decoration-skip-ink:none]"} />
            </div>
          ))}
        </div>
        <div className="flex"><HBar thumb="w-[146px]" /></div>
      </div>
    </div>
  );
}

const Check = () => (
  <svg width="15" height="15" viewBox="0 0 15 15"><path d="M2 8l4 5.500L13 1.500" fill="none" stroke="#000" strokeWidth="2.500" /></svg>
);

function MapCanvas() {
  const p = { fill: "#e8718d", stroke: "#2a2a2a", strokeWidth: 1.4, vectorEffect: "non-scaling-stroke" as const, strokeLinejoin: "round" as const };
  return (
    <div className="relative mr-[1px] min-w-0 flex-1 overflow-hidden border border-[#a8a8a8] bg-white">
      <svg className="absolute inset-0" width="1424" height="832" viewBox="496 151 1424 832">
        <g transform="translate(1020 220) scale(.57416 .33333)">
          <path {...p} d="M210 -10L213 42 243 540H1306V366L1020 123 984 152 955 172 945 155 930 138 900 128 877 119 716 282 655 370 598 388 567 399 559 389 563 372 562 345 550 337 537 332 527 317 514 320 505 303 489 290 487 265 285 42 240 -10z" />
          <path {...p} fill="none" d="M598 388V540" />
          <path {...p} fill="none" d="M984 152L991 210 992 245 1006 275 1005 285 1019 316 1010 345 1005 420 1003 540" />
          <path {...p} d="M190 613H112L110 604 107 616 90 621 64 618 55 636 44 615 36 604 24 620 20 655 12 660 16 690 12 715 20 735 32 757 39 790 35 822 42 830 50 817 62 834 74 819 96 827 110 815 114 800 124 808 130 850 142 870 136 890 148 895 152 925 163 942 170 925 190 960z" />
        </g>
      </svg>
    </div>
  );
}

const box = "flex shrink-0 items-center rounded-[3px] border border-[#b0b0b0] bg-white";
const Spin = () => (
  <div className="flex h-full w-[22px] shrink-0 flex-col items-center justify-center gap-[6px] border-l border-[#b8b8b8]">
    <svg width="11" height="6" viewBox="0 0 11 6"><path d="M0 6h11L5.500 0z" fill="#555" /></svg>
    <svg width="11" height="6" viewBox="0 0 11 6"><path d="M0 0h11L5.500 6z" fill="#555" /></svg>
  </div>
);

function StatusBar() {
  return (
    <div className="flex h-[36px] shrink-0 items-center pl-[4px]">
      <div className={box + " h-[30px] w-[291px] pl-[10px] text-[#808080]"}>
        <Ic n="lens" s={19} /><Fit t="Type to locate (Ctrl+K)" w={164} className="ml-[9px] mt-[1px]" />
      </div>
      <Fit t="Coordinate" w={77} className="ml-[583px] mt-[1px]" />
      <div className={box + " ml-[3px] h-[30px] w-[107px] justify-center"}><Fit t="-7.68,16.94" w={84} className="mt-[1px]" /></div>
      <svg className="ml-[5px] shrink-0" width="23" height="24" viewBox="0 0 23 24">
        <g transform="rotate(-20 8 8)"><rect x="3" y="1" width="9" height="14" rx="4.500" fill="#fff" stroke="#111" strokeWidth="2.200" /><path d="M7.500 1v9M3 7h9" stroke="#111" strokeWidth="2.500" /></g>
        <circle cx="13" cy="17" r="5" fill="#fff" stroke="#111" strokeWidth="2.400" /><circle cx="13" cy="17" r="1.800" fill="#111" />
        <path d="M14 5l7-3M17 8l4-1M1 15l4 2M3 20l3-1" stroke="#111" strokeWidth="1.500" strokeDasharray="2 1.500" />
      </svg>
      <Fit t="Scale" w={37} className="ml-[13px] mt-[1px]" />
      <div className={box + " ml-[3px] h-[27px] w-[114px] pl-[3px]"}><Fit t=":27551392" w={78} className="mt-[1px]" /><div className="ml-[2px] flex h-full flex-1 items-center justify-center bg-[#f4f4f4] pr-[2px]"><Arr /></div></div>
      <svg className="ml-[13px] shrink-0" width="19" height="23" viewBox="0 0 19 23"><path d="M4 11V7a5.500 5.500 0 0 1 11 0v4" fill="none" stroke="#999" strokeWidth="2" /><rect x="1" y="10" width="17" height="12" rx="1" fill="#555" /></svg>
      <Fit t="Magnifier" w={65} className="ml-[9px] mt-[1px]" />
      <div className={box + " ml-[3px] h-[29px] w-[109px] pl-[4px]"}><Fit t="100%" w={43} className="mt-[1px]" /><div className="flex-1" /><Spin /></div>
      <Fit t="Rotation" w={58} className="ml-[9px] mt-[1px]" />
      <div className={box + " ml-[10px] h-[29px] w-[101px] pl-[4px]"}><Fit t="0.0 °" w={36} className="mt-[1px]" /><div className="flex-1" /><Spin /></div>
      <div className="ml-[6px] flex size-[21px] shrink-0 items-center justify-center border border-[#b8b8b8] bg-white"><Check /></div>
      <Fit t="Render" w={50} className="ml-[8px] mt-[1px]" />
      <svg className="ml-[15px] shrink-0" width="24" height="22" viewBox="0 0 24 22" fill="none" stroke="#666" strokeWidth="1.200"><circle cx="12" cy="11" r="9.500" /><path d="M2.500 11h19M12 1.500v19M4.500 5.500h15M5 17h14" /><ellipse cx="12" cy="11" rx="4.500" ry="9.500" /><path d="M1 10q1-5 6-6h10q5 1 6 6z" fill="#777" fillOpacity=".6" /></svg>
      <Fit t="EPSG:4326" w={80} className="ml-[3px] mt-[1px]" />
      <svg className="ml-[26px] shrink-0" width="25" height="23" viewBox="0 0 25 23"><ellipse cx="12.500" cy="10" rx="12" ry="9.500" fill="#585858" /><path d="M14 18l9 4.500-3-8z" fill="#585858" /></svg>
    </div>
  );
}

/* ---- taskbar ---- */
const apps: { on?: boolean; active?: boolean; s: number; g: React.ReactNode }[] = [
  { s: 36, g: <g><path d="M2 18C2 4 18-2 28 6c5 4 6 9 4 12-2 3-6 3-8 2-2-2 0-3 0-6 0-4-5-6-9-5C8 10 2 14 2 18z" fill="#35c1c8" /><path d="M26 5c6 4 8 9 6 13-2 3-6 3-8 2-2-2 0-3 0-6z" fill="#5fdc5a" /><path d="M1 18C1 10 9 6 15 9c-4 2-6 6-5 11 1 7 6 12 12 14C10 37 1 29 1 18z" fill="#1e88dc" /><path d="M10 20c-1-5 1-9 5-11-2 4-1 9 3 13 4 3 9 3 14 1-2 6-8 12-14 11-5-2-8-8-8-14z" fill="#0f55b0" /></g> },
  { on: true, s: 34, g: <g><path d="M2 6q0-2 2-2h9l3 3v5H2z" fill="#e09c10" /><rect x="2" y="8" width="32" height="23" rx="1" fill="#fdd262" /><path d="M2 20h32v10H2z" fill="#f8c63c" /><path d="M8 31V20q0-2 2-2h16q2 0 2 2v11h-5v-6H13v6z" fill="#3c98e0" /></g> },
  { s: 36, g: <g><path d="M25 1l10 4v26l-10 4L9 20l-6 5-3-2v-1l7-6-7-6 3-3 6 5z" fill="#1883d0" /><path d="M25 1l10 4v26l-10 4z" fill="#2fa8f0" /><path d="M25 10v16L14 18z" fill="#1f3140" /></g> },
  { s: 34, g: <g><rect x="1" y="4" width="34" height="28" fill="#c8c8c8" /><rect x="2.500" y="8" width="31" height="22.500" fill="#000" /><path d="M3 8h30L3 20z" fill="#333" /><text x="4" y="15.500" fontSize="7" fontWeight="bold" fontFamily="Liberation Mono, monospace" fill="#ddd">C:\_</text></g> },
  { on: true, s: 36, g: <g><circle cx="18" cy="18" r="17.500" fill="#fbc116" /><path d="M3 9a17.500 17.500 0 0 1 30 0H18l-7.500 13z" fill="#e33b2e" /><path d="M3 9l8 13q3 5 9 4.500L17 35.500A17.500 17.500 0 0 1 3 9z" fill="#2f9e4c" /><path d="M18 9h15.200q4 12-4 20-5 6-12.200 6.500L26 22z" fill="#fbc116" /><circle cx="18" cy="18" r="8.800" fill="#fff" /><circle cx="18" cy="18" r="7" fill="#2f7de8" /></g> },
  { s: 36, g: <g><path d="M4 3q0-2 2-2h15l11 12v20q0 2-2 2H6q-2 0-2-2z" fill="#555" /><path d="M7 5q0-1 1-1h11l9 9v18q0 1-1 1H8q-1 0-1-1z" fill="#f2f2f2" /><path d="M21 1h11v12z" fill="#808080" /><path d="M18 4v10h11z" fill="#d8d8d8" /></g> },
  { s: 36, g: <g><circle cx="18" cy="18" r="17.500" fill="#fff" /><circle cx="18" cy="18" r="15.500" fill="#1059ae" /><path d="M30 13A13 13 0 1 0 30 23" fill="none" stroke="#fff" strokeWidth="2.500" /><path d="M25 14.500a7.500 7.500 0 1 0 0 7M15 18h19" fill="none" stroke="#fff" strokeWidth="3.500" /></g> },
  { active: true, s: 34, g: <g transform="scale(1.5)"><Q /></g> },
  { on: true, s: 34, g: <g><path d="M16 5h18v26H16z" fill="#fff" stroke="#2a5699" /><path d="M20 10h12M20 14h12M20 18h12M20 22h12M20 26h12" stroke="#2a5699" strokeWidth="2" /><path d="M2 5l19-3v32L2 31z" fill="#2a5699" /><text x="3.500" y="24" fontSize="15" fontWeight="bold" fontFamily="Open Sans, sans-serif" fill="#fff">W</text></g> },
  { on: true, s: 36, g: <g><path d="M2 20C3 8 17 4 26 9c8 5 8 17 0 22-3 2-6 1-6-2s-3-4-6-3C6 29 2 26 2 20z" fill="#c4dcee" stroke="#8ab0cc" /><circle cx="9" cy="19" r="3" fill="#e05038" /><circle cx="13" cy="12.500" r="3" fill="#6cc04a" /><circle cx="20" cy="11" r="3" fill="#f0c030" /><circle cx="26" cy="17" r="3" fill="#e89030" /><circle cx="15" cy="22" r="2.500" fill="#1f3140" /><path d="M32 5L23 32" stroke="#d8862c" strokeWidth="3.500" /><path d="M28 0l8 3-3 6-5-2z" fill="#c89868" /></g> },
  { on: true, s: 36, g: <g><path d="M1 25Q3 17 12 15l12 4-2 4q-5 4-11 3z" fill="#8a8a8a" /><ellipse cx="18" cy="10" rx="14" ry="8" transform="rotate(-22 18 10)" fill="#f4f4f4" stroke="#d03038" strokeWidth="2.500" /><path d="M17 6l4 15M26 8L12 20" stroke="#999" strokeWidth="2" /><g fill="none" stroke="#1c7cc0" strokeWidth="2.500"><ellipse cx="28" cy="22" rx="5" ry="3.500" transform="rotate(25 28 22)" /><ellipse cx="21" cy="29" rx="3" ry="5" /></g></g> },
];

function Taskbar() {
  return (
    <div className="flex h-[60px] shrink-0 items-stretch bg-gradient-to-r from-[#21373f] via-[#20313f] to-[#1a2442] text-white">
      <div className="flex w-[72px] items-center justify-center"><svg width="25" height="25" viewBox="0 0 25 25"><path d="M0 3.500l10.500-1.500v10H0zM11.500 1.800L25 0v12H11.500zM0 13h10.500v10L0 21.500zM11.500 13H25v12l-13.500-1.800z" fill="#fff" /></svg></div>
      <div className="flex w-[516px] items-center border-2 border-[#c0c0c0] bg-[#f2f2f2] pl-[16px] text-[#222]">
        <svg width="25" height="26" viewBox="0 0 25 26" fill="none" stroke="#111" strokeWidth="1.800"><circle cx="16.500" cy="8.500" r="7.500" /><path d="M11 14L1 25" /></svg>
        <Fit t="Type here to search" w={198} className="ml-[17px] mt-[3px] text-[21px]" />
      </div>
      <div className="w-[3px]" />
      {apps.map((a, i) => (
        <div key={i} className={"relative flex w-[75px] items-center justify-center " + (a.active ? "border-x border-transparent bg-[#4d5d68] bg-clip-padding" : "")}>
          <svg width={a.s} height={a.s} viewBox="0 0 36 36">{a.g}</svg>
          {a.on && <div className="absolute bottom-0 left-[7px] h-[3px] w-[61px] bg-[#76b9ed]" />}
          {a.active && <div className="absolute bottom-0 left-0 h-[3px] w-full bg-[#76b9ed]" />}
          {a.active && <div className="absolute right-[5px] top-0 h-[57px] w-px bg-[#2c3c48]" />}
        </div>
      ))}
      <div className="flex-1" />
      <div className="flex items-center">
        <svg width="18" height="10" viewBox="0 0 18 10"><path d="M.5 9.500L9 1l8.500 8.500" fill="none" stroke="#fff" strokeWidth="1.400" /></svg>
        <svg className="ml-[15px]" width="24" height="17" viewBox="0 0 24 17"><path d="M2 1v4M6 1v4" stroke="#fff" strokeWidth="1.300" /><path d="M.5 4.500h7v3L5.500 9.500h-3L.5 7.500z" fill="#1a2442" stroke="#fff" /><path d="M4 9.500V12h2" stroke="#fff" fill="none" /><rect x="8.500" y="5" width="12" height="8" fill="#fff" /><path d="M9 3.500h13v11H6.500v-3M22 7.500h1.500v3H22" stroke="#fff" fill="none" /></svg>
        <svg className="ml-[16px]" width="19" height="19" viewBox="0 0 19 19" fill="none" stroke="#fff" strokeWidth="1.300"><path d="M1 18A17 17 0 0 1 18 1" opacity=".6" /><path d="M5 18A13 13 0 0 1 18 5.500M9 18a9 9 0 0 1 9-8.500M12.500 18a5.500 5.500 0 0 1 5-5" /><circle cx="17" cy="17" r="1" fill="#fff" /></svg>
        <svg className="ml-[14px]" width="24" height="20" viewBox="0 0 24 20" fill="none" stroke="#fff" strokeWidth="1.200"><path d="M1 7h4l5-5v16l-5-5H1z" /><path d="M13 7q2 3 0 6M16 5q3.500 5 0 10" /><path d="M19.500 3q5 7 0 14" opacity=".5" /></svg>
        <Fit t="DEU" w={33} className="ml-[14px] mt-[1px] text-[17px]" />
        <div className="ml-[21px] flex w-[84px] flex-col items-center text-[17px] leading-[28px]">
          <Fit t="11:18 AM" w={76} />
          <Fit t="10/6/2023" w={82} />
        </div>
        <div className="relative ml-[28px] mb-[5px] mr-[30px]">
          <svg width="25" height="25" viewBox="0 0 25 25"><path d="M0 0h25v20h-11l-5 5v-5H0z" fill="#fff" /><path d="M5 5.500h15M5 10h15M5 14.500h10" stroke="#1a2442" strokeWidth="1.500" /></svg>
          <div className="absolute left-[9px] top-[11px] flex size-[27px] items-center justify-center rounded-full border border-[#8a8f96] bg-[#353b44] text-[15px] font-semibold">21</div>
        </div>
        <div className="mr-[6px] h-[60px] w-px bg-[#6a7284]" />
      </div>
    </div>
  );
}

/* ---- popup menu ---- */
const popup: [string, string, number, string?, number?][] = [
  ["selval", "Select Features by Value...", 202, "F3", 18],
  ["selexp", "Select Features by Expression...", 244, "Ctrl+F3", 58],
  ["bars", "Select All Features", 142],
  ["invert", "Invert Feature Selection", 184],
];
function Popup() {
  return (
    <div className="absolute left-[870px] top-[102px] h-[132px] w-[465px] border border-[#999] bg-white shadow-[2px_1px_0_0_#8c8c8c]">
      {popup.map(([ic, t, w, k, kw], i) => (
        <div key={i} className={"flex h-[33px] items-center pl-[8px] " + (i === 1 ? "bg-[#0078d7] text-white outline-1 -outline-offset-1 outline-[#3a9ae8]" : "")}>
          <div className="mb-[1px]"><Ic n={ic} s={22} /></div>
          <Fit t={t} w={w} className="ml-[7px]" />
          <div className="flex-1" />
          {k && <div className="w-[72px]"><Fit t={k} w={kw!} /></div>}
        </div>
      ))}
    </div>
  );
}

/* ---- attribute table window ---- */
const rows: [string, number, string, number, string][] = [
  ["Benin", 42, "BEN", 31, "B"],
  ["Burkina Faso", 98, "BFA", 29, "B"],
  ["Central African ...", 132, "CAF", 32, "C"],
  ["Cameroon", 82, "CMR", 38, "C"],
  ["Congo", 53, "COG", 36, "C"],
  ["Gabon", 52, "GAB", 34, "G"],
];
const mini = (s: string) =>
  s.split(" ").map((n, i) => (n === "-" ? <Sep key={i} w="w-[9px]" /> : <div key={i} className="flex w-[24px] shrink-0 justify-center"><Ic n={n} s={16} /></div>));

function TableWindow() {
  const cell = "flex shrink-0 items-center border-b border-r border-[#c4c4c4] ";
  return (
    <div className="absolute left-[512px] top-[322px] flex h-[423px] w-[516px] flex-col border border-[#707070] bg-[#f0f0f0] shadow-[0_6px_16px_rgba(0,0,0,0.35)]">
      <div className="flex h-[44px] shrink-0 items-center bg-white pl-[11px]">
        <div className="mb-[2px]"><Ic n="q" /></div>
        <Fit t="nga_admbnda_osgof_eha_itos...." w={255} className="ml-[10px] mt-[2px]" />
        <svg className="mb-[1px] ml-[32px]" width="156" height="16" viewBox="0 0 156 16" fill="none" stroke="#000" strokeWidth="1.200"><path d="M0 8h15M69.500 .6h14v14h-14zM140.500 .5l15 15M155.500 .5l-15 15" /></svg>
      </div>
      <div className="flex h-[35px] shrink-0 items-center pb-[1px] pl-[6px]">
        {mini("pencil multi gsave refresh - copy - selexp bars invert desel2 funnel totop pan zrow - colg colg edit abacus - cond")}
        <svg className="ml-[20px]" width="13" height="11" viewBox="0 0 13 11" fill="none" stroke="#222" strokeWidth="1.500"><path d="M1 .5l5 5-5 5M7 .5l5 5-5 5" /></svg>
      </div>
      <div className="mx-[1px] flex h-[283px] shrink-0 border-t border-[#b0b0b0] bg-white">
        <div className="min-w-0 flex-1 overflow-hidden">
          <div className="flex h-[31px] w-[700px] bg-gradient-to-b from-[#fafafa] to-[#ebebeb]">
            <div className={cell + "w-[27px] border-[#aaa]"} />
            <div className={cell + "w-[150px] justify-center pt-[3px]"}><Fit t="OBJECTID" w={77} /></div>
            <div className={cell + "w-[150px] justify-center pt-[3px]"}><Fit t="admin0Name_en" w={132} /></div>
            <div className={cell + "w-[150px] justify-center pt-[3px]"}><Fit t="admin0Pcode" w={108} /></div>
            <div className={cell + "w-[150px] pl-[9px] pt-[3px]"}>admin1</div>
          </div>
          {rows.map(([n, nw, c, cw, x], i) => (
            <div key={i} className={"flex h-[45px] w-[700px] " + (i % 2 ? "bg-[#e7e6e2]" : "bg-white")}>
              <div className={cell + "w-[27px] border-[#aaa] bg-gradient-to-r from-[#fdfdfd] to-[#ececec] pl-[3px] pt-[3px]"}>{i + 1}</div>
              <div className={cell + "w-[150px] justify-end pr-[3px] pt-[3px] " + (i === 2 ? "bg-gradient-to-b from-white to-[#e8f3fd] text-[#444] outline-2 -outline-offset-2 outline-[#0aff80]" : "")}>{i + 1}</div>
              <div className={cell + "w-[150px] pl-[3px] pt-[3px]"}><Fit t={n} w={nw} /></div>
              <div className={cell + "w-[150px] pl-[3px] pt-[3px]"}><Fit t={c} w={cw} /></div>
              <div className={cell + "w-[150px] pl-[3px] pt-[3px]"}>{x}</div>
            </div>
          ))}
        </div>
        <VBar w="w-[21px]" top="h-0" thumb="h-[86px] border-t-0" />
      </div>
      <div className="mx-[1px] flex shrink-0 border-b border-[#b0b0b0]"><HBar thumb="w-[78px]" /><div className="w-[20px] border-l border-t border-[#b8b8b8]" /></div>
      <div className="flex flex-1 items-center px-[3px]">
        <div className="flex h-[31px] w-[173px] items-center rounded-[3px] border border-[#a8a8a8] bg-gradient-to-b from-white to-[#f0f0f0] pl-[4px]">
          <Ic n="table" s={20} /><Fit t="Show All Features" w={127} className="ml-[4px]" />
          <div className="pl-[3px] pt-[15px]"><svg width="11" height="6" viewBox="0 0 11 6"><path d="M0 0h11L5.500 6z" fill="#444" /></svg></div>
        </div>
        <div className="flex-1" />
        <Ic n="form" s={21} />
        <div className="ml-[6px] mr-[1px] flex h-[31px] w-[31px] items-center justify-center rounded-[3px] border border-[#a8a8a8] bg-[#dcdcdc]"><Ic n="table" s={20} /></div>
      </div>
    </div>
  );
}

/* ---- expression dialog ---- */
const groups: [string, number][] = [
  ["Aggregates", 83], ["Arrays", 45], ["Color", 39], ["Conditionals", 89], ["Conversions", 88], ["Date and Time", 104],
  ["Fields and Values", 122], ["Files and Paths", 105], ["Fuzzy Matching", 111], ["General", 53], ["Geometry", 71],
  ["Map Layers", 81], ["Maps", 39], ["Math", 37], ["Operators", 72], ["Rasters", 51],
];
const frame = "flex shrink-0 items-center justify-center rounded-[3px] border";
const btn = frame + " border-[#b8b8b8] bg-gradient-to-b from-white to-[#f0f0f0]";
const Dots = () => <div className="h-[18px] w-[3px] bg-[radial-gradient(#bbb_0.7px,transparent_0.9px)] bg-[length:3px_3px]" />;

function ExpressionDialog() {
  return (
    <div className="absolute left-[1118px] top-[394px] flex h-[573px] w-[777px] flex-col border-t-4 border-[#8c8c8c] bg-[#efefef] text-[#222]">
      <div className="flex h-[42px] shrink-0 items-center bg-white pb-[2px] pl-[9px]">
        <Ic n="q" s={21} />
        <Fit t="nga_admbnda_osgof_eha_itos.gdb — nga_admbnda_osgof_eha_itos.gdb/nga_admbnda_osgof..." w={693} className="ml-[5px] mt-[3px]" />
        <svg className="ml-[20px]" width="15" height="15" viewBox="0 0 15 15"><path d="M.5.5l14 14M14.500.5l-14 14" stroke="#333" strokeWidth="1.200" /></svg>
      </div>
      <div className="flex h-[37px] shrink-0 items-end pl-[4px] pr-[2px]">
        <div className="flex h-[34px] w-[100px] items-center justify-center rounded-t-[3px] border border-b-0 border-[#b8b8b8] bg-[#f9f9f9] pr-[4px]"><Fit t="Expression" w={69} /></div>
        <div className="flex h-[32px] w-[128px] items-center justify-center rounded-tr-[3px] border border-l-0 border-[#b8b8b8] bg-[#e8e8e8] pt-[1px]"><Fit t="Function Editor" w={97} /></div>
        <div className="h-px flex-1 bg-[#c8c8c8]" />
      </div>
      <div className="flex h-[421px] shrink-0 pl-[13px] pt-[14px]">
        <div className="flex w-[265px] shrink-0 flex-col">
          <div className="flex gap-[1.700px]">
            {["pageP", "diskP", "editP", "trash", "import", "export"].map((n) => (
              <div key={n} className={btn + " h-[30px] w-[29px]"}><Ic n={n} s={22} /></div>
            ))}
          </div>
          <div className="mt-[8px] h-[277px] shrink-0 border border-[#b8b8b8] bg-white"><div className="m-[1px] h-[23px] border-l border-[#777] bg-[#efefef]" /></div>
          <div className="mt-[8px] flex gap-[2px]">
            {["=", "+", "-", "/", "*", "^", "||", "(", ")", "'\\n'"].map((o, i) => (
              <div key={o} className={(i ? btn : frame + " border-[#5aa8e8] bg-[#e4f0fb]") + " h-[30px] w-[24.700px]"}>{i === 9 ? <Fit t={o} w={19} /> : <span className="scale-x-90 pt-[1px]">{o}</span>}</div>
            ))}
          </div>
          <div className="mt-[10px] flex items-center">
            <Fit t="Feature" w={47} className="mt-[1px]" />
            <div className={box + " ml-[8px] h-[27px] w-[136px] pl-[2px]"}><Fit t="Benin" w={35} className="mt-[1px]" /><div className="ml-auto flex h-full w-[27px] items-center justify-center bg-[#f4f4f4] pr-[2px]"><Arr /></div></div>
            <div className={btn + " ml-[8px] h-[30px] w-[29px]"}><svg width="14" height="21" viewBox="0 0 14 21"><path d="M13 1v19L1 10.500z" fill="#ddd" stroke="#bbb" /></svg></div>
            <div className={btn + " ml-[8px] h-[30px] w-[29px]"}><svg width="14" height="21" viewBox="0 0 14 21"><path d="M1 1v19l12-9.500z" fill={B} stroke={BS} /></svg></div>
          </div>
          <Fit t="Preview:" w={54} className="mt-[6px]" />
        </div>
        <div className="flex w-[27px] shrink-0 items-center justify-center"><Dots /></div>
        <div className="flex w-[223px] shrink-0 flex-col text-[#777]">
          <div className="flex justify-between">
            <div className={box + " h-[30px] w-[136px] pl-[9px]"}><Ic n="lens" s={18} /><Fit t="Search..." w={55} className="ml-[7px]" /></div>
            <div className={btn + " h-[30px] w-[79px]"}><Fit t="Show Help" w={69} /></div>
          </div>
          <div className="mt-[7px] flex h-[384px] border border-[#b8b8b8] bg-white text-[#111]">
            <div className="min-w-0 flex-1 overflow-hidden">
              {groups.map(([g, w]) => (
                <div key={g} className="flex h-[24px] items-center">
                  <div className="flex w-[27px] shrink-0 justify-center"><svg width="6" height="11" viewBox="0 0 6 11"><path d="M0 0v11l6-5.500z" fill="#555" /></svg></div>
                  <div className="flex h-full flex-1 items-center bg-[#c0c0c0] pl-[2px] pt-[3px]"><Fit t={g} w={w} /></div>
                </div>
              ))}
            </div>
            <VBar w="w-[19px]" top="h-0" thumb="h-[256px] border-t-0" btn="h-[20px]" />
          </div>
        </div>
        <div className="flex w-[13px] shrink-0 items-center justify-start"><Dots /></div>
        <div className="h-[421px] w-[223px] shrink-0 border border-[#b8b8b8] bg-white" />
      </div>
      <div className="mt-[34px] flex shrink-0 pl-[4px] pr-[2px]">
        <div className={btn + " h-[30px] w-[70px] pr-[2px]"}><Fit t="Help" w={29} /></div>
        <div className="flex-1" />
        <div className={btn + " h-[30px] w-[137px] pr-[9px]"}><Ic n="selexp" s={19} /><Fit t="Select Features" w={95} className="ml-[2px]" /></div>
        <div className={btn + " h-[30px] w-[17px]"}><Arr /></div>
        <div className={btn + " ml-[16px] h-[30px] w-[72px]"}><Fit t="&Close" w={34} /></div>
      </div>
    </div>
  );
}

const menus: [string, number][] = [
  ["Pro&ject", 54], ["&Edit", 30], ["&View", 37], ["&Layer", 41], ["&Settings", 63], ["&Plugins", 56], ["Vect&or", 50],
  ["&Raster", 49], ["&Database", 74], ["&Web", 37], ["&Mesh", 43], ["Pro&cessing", 84], ["&Help", 37],
];
const Num = ({ children, className }: Kids & { className: string }) => (
  <div className={"absolute text-[30px] font-bold leading-[30px] text-[#10d848] " + className}>{children}</div>
);

export default function App() {
  return (
    <div className="relative flex h-[1080px] w-[1920px] flex-col overflow-hidden bg-[#f0f0f0] font-['Open_Sans','Noto_Sans',sans-serif] text-[17px] leading-[24px] text-black">
      <div className="flex h-[34px] shrink-0 items-center bg-white pl-[2px] text-[#8c8c8c]">
        <Ic n="q" s={23} />
        <Fit t="*Untitled Project — QGIS" w={197} className="ml-[6px] mt-[2px]" />
        <div className="flex-1" />
        <svg className="mb-[1px] mr-[29px]" width="154" height="16" viewBox="0 0 154 16" fill="none" stroke="#8a8a8a" strokeWidth="1.200"><path d="M0 8h15M68.500 4.500h11v11h-11zM71.500 4.500v-3h11v11h-3M139 .5l14.500 15M153.500 .5l-14.500 15" /></svg>
      </div>
      <div className="flex h-[30px] shrink-0 items-center gap-[17.200px] border-b border-[#d4d4d4] pl-[13px] text-[#a0a0a0]">
        {menus.map(([t, w]) => <Fit key={t} t={t} w={w} className="mt-[2px]" />)}
      </div>
      <div className="flex h-[43px] shrink-0 items-center border-b border-[#b8b8b8] bg-gradient-to-b from-[#fafafa] to-[#efefef]">
        <div className="-ml-[6px] flex items-center"><Tools items="| page open save layout manager style | hand pan zin zout zfull zsel zlay zone zlast znext newmap map3d bookm book clock refresh | select v selval v desel v selloc | ident abacus gear sigma table v ruler v tip run w" /></div>
      </div>
      <div className="flex h-[43px] shrink-0 items-center border-b border-[#b8b8b8] bg-gradient-to-b from-[#fafafa] to-[#efefef]">
        <div className="-ml-[6px] flex items-center"><Tools items="| dsrc gpkg vlay feather chip virt - vtab - | pencils pencil gsave blob vtx w multi trash cut copy paste undo redo | abcY pie - abcB abcR" /></div>
      </div>
      <div className="flex h-[834px] shrink-0">
        <Docks />
        <MapCanvas />
      </div>
      <StatusBar />
      <Taskbar />

      <Popup />
      <TableWindow />
      <ExpressionDialog />

      <div className="absolute left-[104px] top-[490px] h-[30px] w-[29px] border-[3px] border-[#ed1c24]" />
      <div className="absolute left-[648px] top-[367px] h-[32px] w-[39px] border-[3px] border-[#ed1c24]" />
      <div className="absolute left-[834px] top-[61px] h-[49px] w-[59px] border-[3px] border-[#ed1c24]" />
      <div className="absolute left-[868px] top-[130px] h-[42px] w-[476px] border-[3px] border-[#ed1c24]" />
      <div className="absolute left-[1120px] top-[390px] h-[578px] w-[789px] border-[3px] border-[#ed1c24]" />
      <Num className="left-[100px] top-[455px]">1</Num>
      <Num className="left-[650px] top-[286px]">2</Num>
      <Num className="left-[844px] top-[23px]">3</Num>
      <Num className="left-[1069px] top-[792px]">4</Num>
    </div>
  );
}
